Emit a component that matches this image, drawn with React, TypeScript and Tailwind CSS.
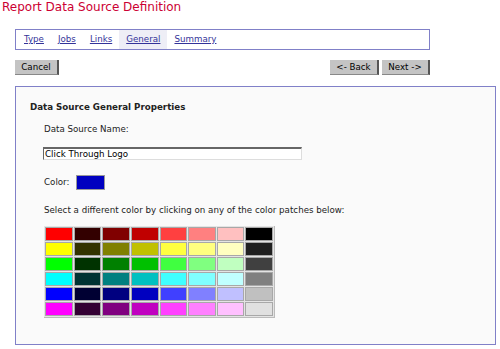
// Definição da fonte de dados — passo "General" do assistente.
const TABS = ['Type', 'Jobs', 'Links', 'General', 'Summary'];

const PATCHES = [
  ['#ff0000', '#330000', '#800000', '#c00000', '#ff4040', '#ff8080', '#ffc0c0', '#000000'],
  ['#ffff00', '#333300', '#808000', '#c0c000', '#ffff40', '#ffff80', '#ffffc0', '#202020'],
  ['#00ff00', '#003300', '#008000', '#00c000', '#40ff40', '#80ff80', '#c0ffc0', '#404040'],
  ['#00ffff', '#003333', '#008080', '#00c0c0', '#40ffff', '#80ffff', '#c0ffff', '#808080'],
  ['#0000ff', '#000033', '#000080', '#0000c0', '#4040ff', '#8080ff', '#c0c0ff', '#c0c0c0'],
  ['#ff00ff', '#330033', '#800080', '#c000c0', '#ff40ff', '#ff80ff', '#ffc0ff', '#e0e0e0'],
];

function Btn({ label, w }: { label: string; w: string }) {
  return (
    <button
      className={`${w} h-[15px] flex items-center justify-center bg-[#c4c4c4] border-r-2 border-b border-r-[#555] border-b-[#888] text-[8.7px] leading-none text-black`}
    >
      {label}
    </button>
  );
}

export default function App() {
  return (
    <div className="w-[500px] h-[349px] bg-white overflow-hidden font-['DejaVu_Sans',sans-serif] text-[8.7px] text-[#222]">
      <h1 className="pl-[2px] text-[12px] leading-[14px] text-[#cc0033] font-normal">
        Report Data Source Definition
      </h1>

      <div className="ml-[15px] mt-[15px] w-[415px] h-[21px] border border-[#8080c8] flex items-stretch pl-[1px]">
        {TABS.map((t) => (
          <span
            key={t}
            className={`px-[7px] flex items-center underline text-[#333399] ${t === 'General' ? 'bg-[#eeeef6]' : ''}`}
          >
            {t}
          </span>
        ))}
      </div>

      <div className="ml-[15px] mt-[10px] w-[415px] flex items-center">
        <Btn label="Cancel" w="w-[44px]" />
        <div className="ml-auto flex gap-[3px]">
          <Btn label="<- Back" w="w-[49px]" />
          <Btn label="Next ->" w="w-[48px]" />
        </div>
      </div>

      <div className="ml-[15px] mt-[11px] w-[481px] h-[259px] border border-[#8080c8] bg-[#fafafa] pt-[14px] pl-[14px]">
        <h2 className="font-bold leading-[12px]">Data Source General Properties</h2>

        <div className="pl-[14px]">
          <p className="mt-[10px] leading-[12px]">Data Source Name:</p>

          <div className="mt-[12px] -ml-[1px] w-[259px] h-[13px] bg-white border-t-2 border-l border-t-[#666] border-l-[#666] border-b border-r border-b-[#ddd] border-r-[#ddd] flex items-center pl-[1px] text-black leading-none">
            Click Through Logo
          </div>

          <div className="mt-[15px] flex items-center">
            <span>Color:</span>
            <span className="ml-[7px] w-[29px] h-[15px] bg-[#0000c0] border border-[#999]" />
          </div>

          <p className="mt-[14px] leading-[12px]">
            Select a different color by clicking on any of the color patches below:
          </p>

          <div className="mt-[10px] w-[231px] grid grid-cols-8 gap-[1px] p-[1px] bg-[#e4e4e4] border-r border-b border-[#bbb]">
            {PATCHES.flat().map((c, i) => (
              <span
                key={i}
                className="h-[14px] border border-[#a8a8a8]"
                style={{ backgroundColor: c }}
              />
            ))}
          </div>
        </div>
      </div>
    </div>
  );
}
